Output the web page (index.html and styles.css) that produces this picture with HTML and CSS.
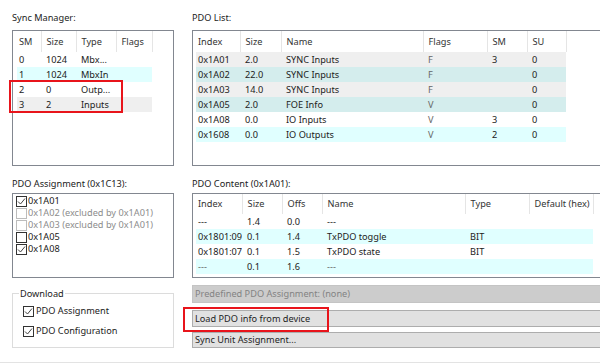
FILE: index.html
```html
<!DOCTYPE html>
<html lang="en">
<head>
  <meta charset="UTF-8">
  <meta name="viewport" content="width=device-width, initial-scale=1.0">
  <title>Process Data</title>
  <link rel="stylesheet" href="styles.css">
</head>
<body>

  <div class="page">

    <!-- Sync Manager -->
    <section>
      <div class="caption">Sync Manager:</div>
      <div class="listview">
        <table class="grid">
          <colgroup><col style="width:24px"><col style="width:35px"><col style="width:40px"><col style="width:36px"></colgroup>
          <thead>
            <tr><th>SM</th><th>Size</th><th>Type</th><th>Flags</th></tr>
          </thead>
          <tbody>
            <tr><td>0</td><td>1024</td><td>Mbx...</td><td></td></tr>
            <tr class="cyan"><td>1</td><td>1024</td><td>MbxIn</td><td></td></tr>
            <tr><td>2</td><td>0</td><td>Outp...</td><td></td></tr>
            <tr class="gray"><td>3</td><td>2</td><td>Inputs</td><td></td></tr>
          </tbody>
        </table>
        <div class="mark sm-mark"></div>
      </div>
    </section>

    <!-- PDO List -->
    <section>
      <div class="caption">PDO List:</div>
      <div class="listview wide">
        <table class="grid">
          <colgroup><col style="width:44px"><col style="width:41px"><col style="width:142px"><col style="width:64px"><col style="width:40px"><col style="width:39px"></colgroup>
          <thead>
            <tr><th>Index</th><th>Size</th><th>Name</th><th>Flags</th><th>SM</th><th>SU</th></tr>
          </thead>
          <tbody>
            <tr class="gray"><td>0x1A01</td><td>2.0</td><td>SYNC Inputs</td><td class="dim">F</td><td>3</td><td>0</td></tr>
            <tr class="teal"><td>0x1A02</td><td>22.0</td><td>SYNC Inputs</td><td class="dim">F</td><td></td><td>0</td></tr>
            <tr class="gray"><td>0x1A03</td><td>14.0</td><td>SYNC Inputs</td><td class="dim">F</td><td></td><td>0</td></tr>
            <tr class="teal"><td>0x1A05</td><td>2.0</td><td>FOE Info</td><td class="dim">V</td><td></td><td>0</td></tr>
            <tr><td>0x1A08</td><td>0.0</td><td>IO Inputs</td><td class="dim">V</td><td>3</td><td>0</td></tr>
            <tr class="cyan"><td>0x1608</td><td>0.0</td><td>IO Outputs</td><td class="dim">V</td><td>2</td><td>0</td></tr>
          </tbody>
        </table>
      </div>
    </section>

    <!-- PDO Assignment -->
    <section>
      <div class="caption lower">PDO Assignment (0x1C13):</div>
      <div class="listbox">
        <div class="option"><span class="check"><svg viewBox="0 0 9 9"><polyline points="1,4.5 3.5,7 8,1.5"/></svg></span>0x1A01</div>
        <div class="option disabled"><span class="check"></span>0x1A02 (excluded by 0x1A01)</div>
        <div class="option disabled"><span class="check"></span>0x1A03 (excluded by 0x1A01)</div>
        <div class="option"><span class="check"></span>0x1A05</div>
        <div class="option"><span class="check"><svg viewBox="0 0 9 9"><polyline points="1,4.5 3.5,7 8,1.5"/></svg></span>0x1A08</div>
      </div>
    </section>

    <!-- PDO Content -->
    <section>
      <div class="caption lower">PDO Content (0x1A01):</div>
      <div class="listview content">
        <table class="grid">
          <colgroup><col style="width:44px"><col style="width:40px"><col style="width:40px"><col style="width:143px"><col style="width:64px"><col style="width:64px"></colgroup>
          <thead>
            <tr><th>Index</th><th>Size</th><th>Offs</th><th>Name</th><th>Type</th><th>Default (hex)</th></tr>
          </thead>
          <tbody>
            <tr><td>---</td><td>1.4</td><td>0.0</td><td>---</td><td></td><td></td></tr>
            <tr class="cyan"><td>0x1801:09</td><td>0.1</td><td>1.4</td><td>TxPDO toggle</td><td>BIT</td><td></td></tr>
            <tr><td>0x1801:07</td><td>0.1</td><td>1.5</td><td>TxPDO state</td><td>BIT</td><td></td></tr>
            <tr class="cyan"><td class="dim">---</td><td>0.1</td><td>1.6</td><td class="dim">---</td><td></td><td></td></tr>
          </tbody>
        </table>
      </div>
    </section>

    <!-- Download -->
    <fieldset class="groupbox">
      <legend>Download</legend>
      <div class="option tall"><span class="check"><svg viewBox="0 0 9 9"><polyline points="1,4.5 3.5,7 8,1.5"/></svg></span>PDO Assignment</div>
      <div class="option tall"><span class="check"><svg viewBox="0 0 9 9"><polyline points="1,4.5 3.5,7 8,1.5"/></svg></span>PDO Configuration</div>
    </fieldset>

    <!-- Actions -->
    <div class="actions">
      <button type="button" class="bar" disabled>Predefined PDO Assignment: (none)</button>
      <button type="button" class="btn">Load PDO info from device</button>
      <button type="button" class="btn last">Sync Unit Assignment...</button>
      <div class="mark load-mark"></div>
    </div>

  </div>

  <div class="footer-rule"></div>

</body>
</html>
```

FILE: styles.css
```css
* {
  box-sizing: border-box;
}

body {
  margin: 0;
  width: 600px;
  height: 363px;
  overflow: hidden;
  background: #fff;
  font-family: "Noto Sans", "Open Sans", sans-serif;
  font-size: 9.2px;
  color: #222;
}

.page {
  display: grid;
  grid-template-columns: 162px 414px;
  column-gap: 18px;
  padding-left: 12px;
}

.caption {
  line-height: 13px;
  margin-top: 11px;
  margin-bottom: 6px;
  white-space: nowrap;
}

.caption.lower {
  margin-bottom: 3px;
}

/* list views */
.listview {
  position: relative;
  height: 136px;
  border: 1px solid #828790;
  padding-left: 4px;
}

.listview.wide {
  padding-left: 3px;
}

.listview.content {
  height: 85px;
  padding-left: 3px;
}

.grid {
  border-collapse: collapse;
  table-layout: fixed;
}

.grid th,
.grid td {
  padding: 0 0 0 5px;
  text-align: left;
  white-space: nowrap;
  overflow: hidden;
  font-weight: normal;
  line-height: 12px;
}

.grid th {
  height: 21px;
  border-right: 1px solid #e5e5e5;
  color: #333;
}

.content .grid th {
  height: 20px;
}

.grid td {
  height: 15px;
}

.grid th:first-child,
.grid td:first-child {
  padding-left: 2px;
}

.grid .dim {
  color: #666;
}

.gray {
  background: #efefef;
}

.teal {
  background: #d4eded;
}

.cyan {
  background: #e0ffff;
}

/* red call-out frames */
.mark {
  position: absolute;
  border: 2px solid #e8141b;
  pointer-events: none;
}

.sm-mark {
  left: -4px;
  top: 49px;
  width: 114px;
  height: 33px;
}

.load-mark {
  left: -9px;
  top: 22px;
  width: 146px;
  height: 25px;
}

/* check list */
.listbox {
  height: 85px;
  border: 1px solid #828790;
  padding: 1px 0 0 3px;
}

.option {
  display: flex;
  align-items: center;
  gap: 1px;
  height: 12px;
  line-height: 12px;
  white-space: nowrap;
}

.option.disabled {
  color: #8d8d8d;
}

.option.tall {
  height: 20px;
  gap: 2px;
}

.check {
  display: flex;
  align-items: center;
  justify-content: center;
  flex: none;
  width: 11px;
  height: 11px;
  border: 1px solid #333;
  background: #fff;
}

.option.disabled .check {
  border-color: #bcbcbc;
}

.check svg {
  width: 9px;
  height: 9px;
  fill: none;
  stroke: #444;
  stroke-width: 1;
}

/* download group */
.groupbox {
  margin: 9px 0 0;
  padding: 1px 0 0 10px;
  height: 61px;
  border: 1px solid #dcdcdc;
}

.groupbox legend {
  margin-left: -4px;
  padding: 0 1px;
  line-height: 13px;
}

/* buttons */
.actions {
  position: relative;
  display: flex;
  flex-direction: column;
  margin-top: 7px;
}

.actions button {
  display: block;
  width: 100%;
  margin: 0;
  padding: 0 0 0 2px;
  font: inherit;
  text-align: left;
  line-height: 12px;
}

.bar {
  height: 18px;
  border: 1px solid #c4c4c4;
  background: #cccccc;
  color: #838383;
  padding-left: 3px;
}

.btn {
  height: 17px;
  margin-top: 7px !important;
  border: 1px solid #adadad;
  background: #e1e1e1;
  color: #1e1e1e;
}

.btn.last {
  height: 16px;
  margin-top: 5px !important;
}

.footer-rule {
  margin-top: 14px;
  border-top: 1px solid #e3e3e3;
}
```
